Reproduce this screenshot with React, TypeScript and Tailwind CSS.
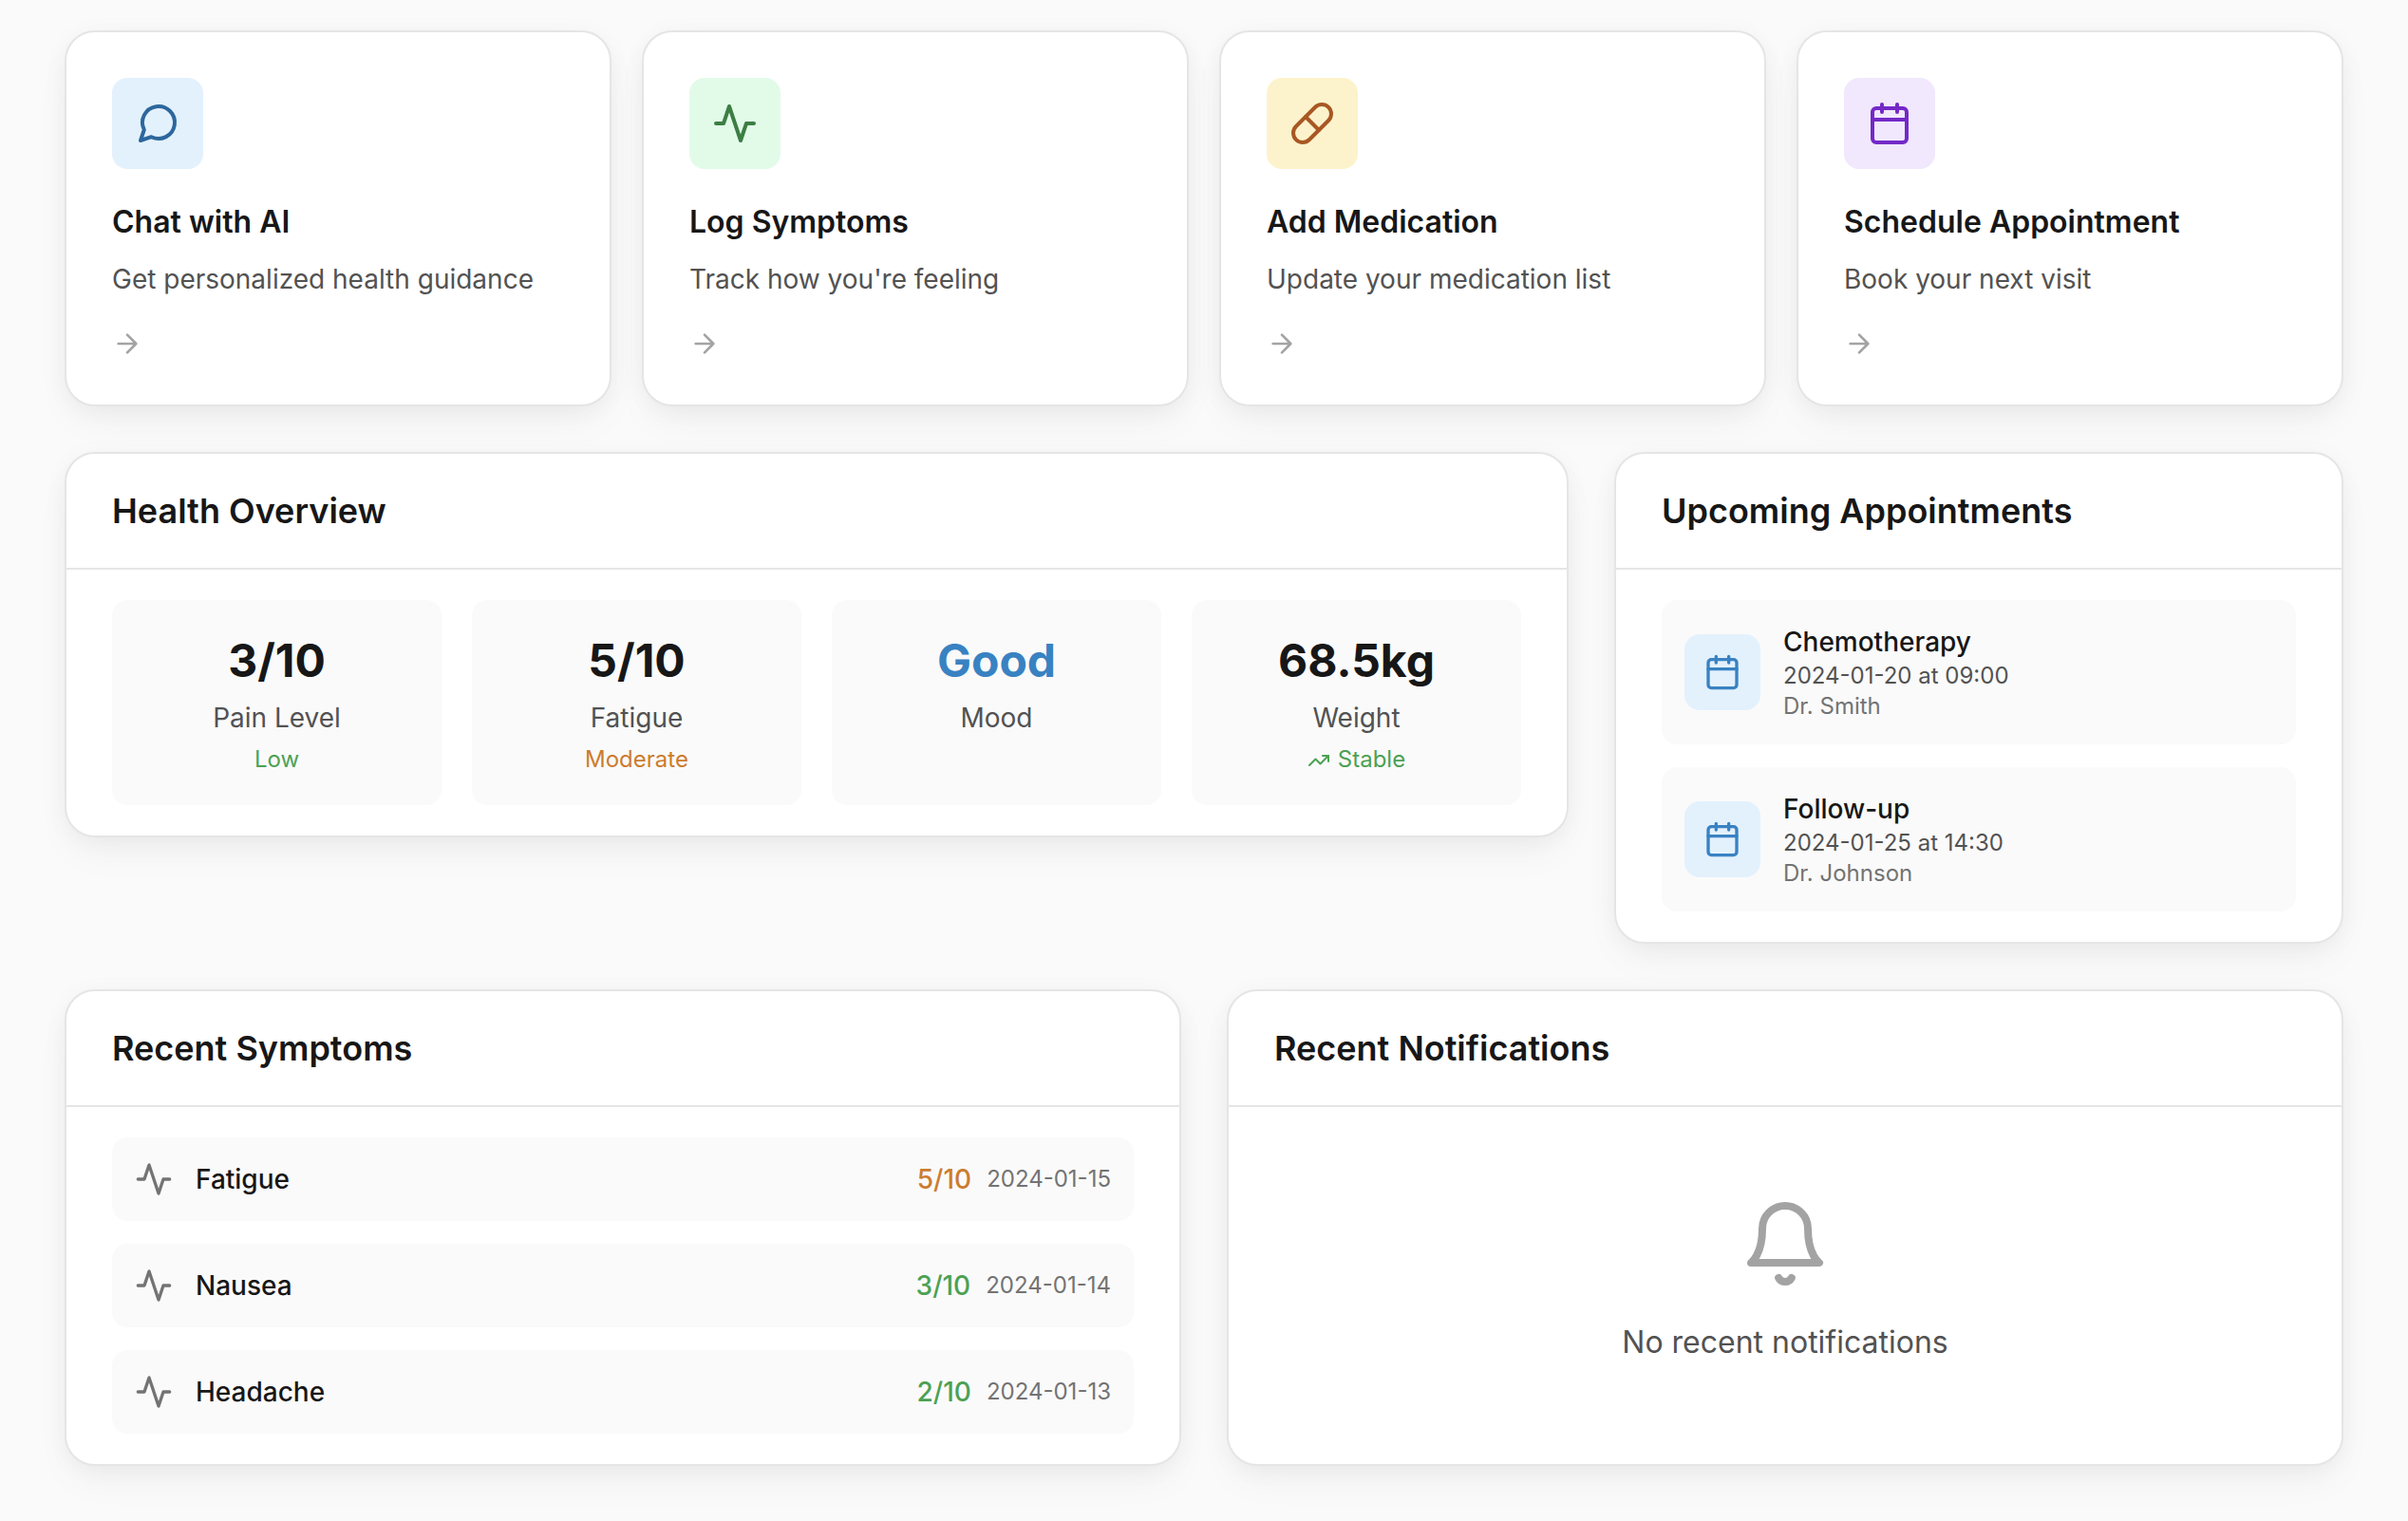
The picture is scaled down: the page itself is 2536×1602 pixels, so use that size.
import type { ReactNode } from 'react';

type IconProps = { className: string; children: ReactNode };

function Icon({ className, children }: IconProps) {
  return (
    <svg
      viewBox="0 0 24 24"
      fill="none"
      stroke="currentColor"
      strokeWidth={2}
      strokeLinecap="round"
      strokeLinejoin="round"
      className={className}
    >
      {children}
    </svg>
  );
}

const messageShape = <path d="m3 21 1.9-5.7a8.5 8.5 0 1 1 3.8 3.8z" />;
const activityShape = <path d="M22 12h-4l-3 9L9 3l-3 9H2" />;
const pillShape = (
  <>
    <path d="m10.5 20.5 10-10a4.95 4.95 0 1 0-7-7l-10 10a4.95 4.95 0 1 0 7 7Z" />
    <path d="m8.5 8.5 7 7" />
  </>
);
const calendarShape = (
  <>
    <rect width="18" height="18" x="3" y="4" rx="2" ry="2" />
    <path d="M16 2v4M8 2v4M3 10h18" />
  </>
);
const arrowShape = <path d="M5 12h14m-7-7 7 7-7 7" />;
const trendShape = (
  <>
    <path d="m22 7-8.5 8.5-5-5L2 17" />
    <path d="M16 7h6v6" />
  </>
);
const bellShape = (
  <>
    <path d="M6 8a6 6 0 0 1 12 0c0 7 3 9 3 9H3s3-2 3-9" />
    <path d="M10.3 21a1.94 1.94 0 0 0 3.4 0" />
  </>
);

const cardClass =
  'rounded-[32px] border-2 border-[#e5e5e5] bg-white shadow-[0_4px_30px_-6px_rgba(0,0,0,0.07),0_20px_40px_-4px_rgba(0,0,0,0.04)]';

const actions = [
  { title: 'Chat with AI', text: 'Get personalized health guidance', shape: messageShape, tone: 'bg-[#e3f1fd] text-[#2d679d]' },
  { title: 'Log Symptoms', text: "Track how you're feeling", shape: activityShape, tone: 'bg-[#e2fbe8] text-[#3c7e44]' },
  { title: 'Add Medication', text: 'Update your medication list', shape: pillShape, tone: 'bg-[#fcf3cc] text-[#a85823]' },
  { title: 'Schedule Appointment', text: 'Book your next visit', shape: calendarShape, tone: 'bg-[#f1e8fd] text-[#7429c6]' },
];

const stats = [
  { value: '3/10', label: 'Pain Level', note: 'Low', valueTone: 'text-[#171717]', noteTone: 'text-[#4ca154]' },
  { value: '5/10', label: 'Fatigue', note: 'Moderate', valueTone: 'text-[#171717]', noteTone: 'text-[#cc7c2e]' },
  { value: 'Good', label: 'Mood', note: '', valueTone: 'text-[#3982c2]', noteTone: '' },
  { value: '68.5kg', label: 'Weight', note: 'Stable', trend: true, valueTone: 'text-[#171717]', noteTone: 'text-[#4ca154]' },
];

const appointments = [
  { title: 'Chemotherapy', time: '2024-01-20 at 09:00', doctor: 'Dr. Smith' },
  { title: 'Follow-up', time: '2024-01-25 at 14:30', doctor: 'Dr. Johnson' },
];

const symptoms = [
  { name: 'Fatigue', score: '5/10', date: '2024-01-15', tone: 'text-[#cc7c2e]' },
  { name: 'Nausea', score: '3/10', date: '2024-01-14', tone: 'text-[#4ca154]' },
  { name: 'Headache', score: '2/10', date: '2024-01-13', tone: 'text-[#4ca154]' },
];

function Panel({ title, className = '', children }: { title: string; className?: string; children: ReactNode }) {
  return (
    <section className={`${cardClass} ${className}`}>
      <header className="border-b-2 border-[#e5e5e5] px-12 py-8">
        <h2 className="text-[36px] leading-[56px] font-semibold">{title}</h2>
      </header>
      <div className="px-12 py-8">{children}</div>
    </section>
  );
}

export default function App() {
  return (
    <main className="min-h-[1602px] bg-[#fafafa] px-[68px] pt-8 pb-[58px] font-['Inter',sans-serif] text-[#171717] antialiased">
      <div className="flex flex-col gap-12">
        <div className="grid grid-cols-4 gap-8">
          {actions.map((a) => (
            <article key={a.title} className={`${cardClass} p-12`}>
              <div className={`mb-8 flex size-24 items-center justify-center rounded-2xl ${a.tone}`}>
                <Icon className="size-12">{a.shape}</Icon>
              </div>
              <h3 className="mb-4 text-[32px] leading-[48px] font-semibold">{a.title}</h3>
              <p className="mb-8 text-[28px] leading-[40px] text-[#525252]">{a.text}</p>
              <Icon className="size-8 text-[#a3a3a3]">{arrowShape}</Icon>
            </article>
          ))}
        </div>

        <div className="grid grid-cols-3 items-start gap-12">
          <Panel title="Health Overview" className="col-span-2">
            <div className="grid grid-cols-4 gap-8">
              {stats.map((s) => (
                <div key={s.label} className="rounded-2xl bg-[#fafafa] p-8 text-center">
                  <div className={`text-[48px] leading-[64px] font-bold ${s.valueTone}`}>{s.value}</div>
                  <div className="mt-2 text-[28px] leading-[40px] text-[#525252]">{s.label}</div>
                  {s.note && (
                    <div className={`mt-2 flex items-center justify-center gap-2 text-2xl leading-8 ${s.noteTone}`}>
                      {s.trend && <Icon className="mt-0.5 size-6">{trendShape}</Icon>}
                      {s.note}
                    </div>
                  )}
                </div>
              ))}
            </div>
          </Panel>

          <Panel title="Upcoming Appointments">
            <div className="flex flex-col gap-6">
              {appointments.map((a) => (
                <div key={a.title} className="flex items-center gap-6 rounded-2xl bg-[#fafafa] p-6">
                  <div className="flex size-20 items-center justify-center rounded-2xl bg-[#e3f1fd] text-[#3982c2]">
                    <Icon className="size-10">{calendarShape}</Icon>
                  </div>
                  <div>
                    <div className="text-[28px] leading-[40px] font-medium">{a.title}</div>
                    <div className="text-2xl leading-8 text-[#525252]">{a.time}</div>
                    <div className="text-2xl leading-8 text-[#737373]">{a.doctor}</div>
                  </div>
                </div>
              ))}
            </div>
          </Panel>
        </div>

        <div className="grid grid-cols-2 gap-12">
          <Panel title="Recent Symptoms">
            <div className="flex flex-col gap-6">
              {symptoms.map((s) => (
                <div key={s.name} className="flex items-center justify-between rounded-2xl bg-[#fafafa] p-6">
                  <div className="flex items-center gap-6">
                    <Icon className="size-10 text-[#737373]">{activityShape}</Icon>
                    <span className="text-[28px] leading-[40px] font-medium">{s.name}</span>
                  </div>
                  <div className="flex items-center gap-4">
                    <span className={`text-[28px] leading-[40px] font-medium ${s.tone}`}>{s.score}</span>
                    <span className="text-2xl leading-8 text-[#737373]">{s.date}</span>
                  </div>
                </div>
              ))}
            </div>
          </Panel>

          <Panel title="Recent Notifications">
            <div className="flex flex-col items-center py-16">
              <Icon className="mb-8 size-24 text-[#a3a3a3]">{bellShape}</Icon>
              <p className="text-[32px] leading-[48px] text-[#525252]">No recent notifications</p>
            </div>
          </Panel>
        </div>
      </div>
    </main>
  );
}
